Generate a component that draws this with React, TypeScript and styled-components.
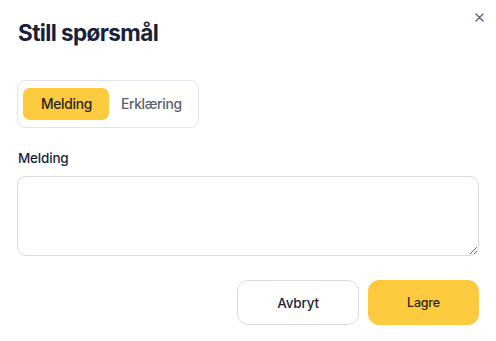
import React, { useState } from "react";
import styled, { createGlobalStyle } from "styled-components";

const GlobalStyle = createGlobalStyle`
	html, body {
		margin: 0;
		padding: 0;
		background: #ffffff;
	}
	body {
		font-family: "Inter", "Lato", sans-serif;
		-webkit-font-smoothing: antialiased;
	}
	* {
		box-sizing: border-box;
	}
`;

const Dialog = styled.div`
	position: relative;
	width: 496px;
	height: 341px;
	padding: 20px 17px 0 17px;
	display: flex;
	flex-direction: column;
	background: #ffffff;
`;

const CloseButton = styled.button`
	position: absolute;
	top: 10px;
	right: 10px;
	width: 14px;
	height: 14px;
	padding: 0;
	border: none;
	background: transparent;
	display: flex;
	align-items: center;
	justify-content: center;
	cursor: pointer;
`;

const Title = styled.h2`
	margin: 0 0 0 1px;
	font-size: 22.5px;
	font-weight: 700;
	line-height: 26px;
	letter-spacing: -0.6px;
	color: #1b1f3b;
`;

const TabGroup = styled.div`
	margin-top: 34px;
	align-self: flex-start;
	display: flex;
	padding: 7px 5px;
	border: 1px solid #e4e4ea;
	border-radius: 9px;
`;

const Tab = styled.button<{ $active?: boolean }>`
	height: 32px;
	padding: ${(p) => (p.$active ? "0 17px 0 18px" : "0 11px 0 12px")};
	border: none;
	border-radius: 7px;
	font-family: inherit;
	font-size: 13.8px;
	font-weight: 500;
	letter-spacing: -0.3px;
	background: ${(p) => (p.$active ? "#fcca3e" : "transparent")};
	color: ${(p) => (p.$active ? "#2a2612" : "#5e5e66")};
	cursor: pointer;
`;

const Label = styled.label`
	margin: 22px 0 0 1px;
	font-size: 13.5px;
	font-weight: 500;
	letter-spacing: -0.2px;
	color: #1b1f3b;
	line-height: 16px;
`;

const MessageInput = styled.textarea`
	margin-top: 10px;
	width: 462px;
	height: 80px;
	padding: 10px 12px;
	border: 1px solid #dadada;
	border-radius: 9px;
	font-family: inherit;
	font-size: 14px;
	resize: vertical;
	outline: none;
`;

const Actions = styled.div`
	margin-top: 24px;
	width: 462px;
	display: flex;
	justify-content: flex-end;
	gap: 9px;
`;

const ActionButton = styled.button<{ $primary?: boolean }>`
	width: ${(p) => (p.$primary ? "111px" : "122px")};
	height: 45px;
	border-radius: 11px;
	border: 1px solid ${(p) => (p.$primary ? "#fcca3e" : "#dcdce0")};
	background: ${(p) => (p.$primary ? "#fcca3e" : "#ffffff")};
	color: ${(p) => (p.$primary ? "#2a2612" : "#1b1f3b")};
	font-family: inherit;
	font-size: ${(p) => (p.$primary ? "12.5px" : "13.5px")};
	font-weight: 500;
	letter-spacing: -0.2px;
	cursor: pointer;
`;

const App: React.FC = () => {
	const [tab, setTab] = useState("melding");
	return (
		<>
			<GlobalStyle />
			<Dialog>
				<CloseButton aria-label="Lukk">
					<svg width="9" height="9" viewBox="0 0 9 9">
						<path d="M1 1L8 8M8 1L1 8" stroke="#5b5f7c" strokeWidth="1.4" strokeLinecap="round" />
					</svg>
				</CloseButton>
				<Title>Still spørsmål</Title>
				<TabGroup>
					<Tab $active={tab === "melding"} onClick={() => setTab("melding")}>Melding</Tab>
					<Tab $active={tab === "erklaering"} onClick={() => setTab("erklaering")}>Erklæring</Tab>
				</TabGroup>
				<Label htmlFor="melding">Melding</Label>
				<MessageInput id="melding" />
				<Actions>
					<ActionButton>Avbryt</ActionButton>
					<ActionButton $primary>Lagre</ActionButton>
				</Actions>
			</Dialog>
		</>
	);
};

export default App;
